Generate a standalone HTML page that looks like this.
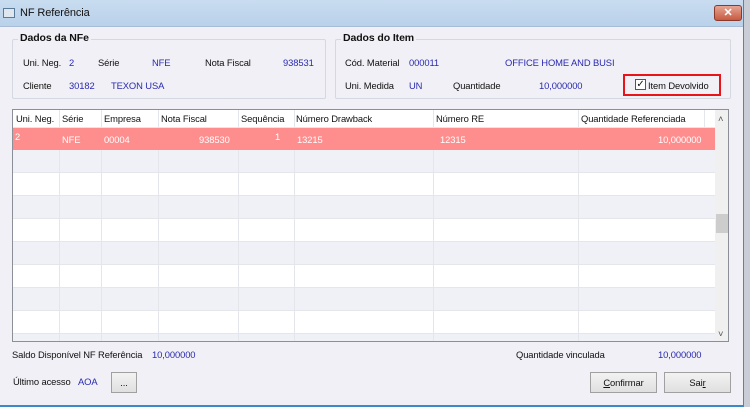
<!DOCTYPE html>
<html><head><style>
*{margin:0;padding:0;box-sizing:border-box}
body{width:750px;height:407px;background:#c9ced6;font-family:"Liberation Sans",sans-serif;font-size:9.4px;letter-spacing:-0.1px;color:#111;position:relative;overflow:hidden}
.win{position:absolute;left:0;top:0;width:744px;height:407px;background:#f0f0f6;border-right:1px solid #6d7d92;border-bottom:2px solid #3a89c9}
.title{position:absolute;left:0;top:0;width:743px;height:27px;background:linear-gradient(#c9dcf0,#b9d1ea);border-bottom:1px solid #a9bdd6}
.title span{position:absolute;left:20px;top:7px;font-size:11px}
.ico{position:absolute;left:3px;top:8px;width:12px;height:10px;background:#dfe6ee;border:1px solid #5a7a9a}
.close{position:absolute;left:714px;top:5px;width:28px;height:16px;border-radius:3px;background:linear-gradient(#e6a594,#c75a43);border:1px solid #8a3a2a;color:#fff;font-weight:bold;text-align:center;font-size:11px;line-height:14px}
.grp{position:absolute;border:1px solid #d4d8e0;border-radius:2px}
.grp b{position:absolute;top:-8px;left:5px;background:#f0f0f6;padding:0 2px;font-size:10.5px}
.t{position:absolute;white-space:nowrap;line-height:11px}
.v{color:#2a2ab0}
.w{color:#fff}
.vl{position:absolute;top:110px;width:1px;height:231px;background:#e4e6ec}
.hl{position:absolute;left:13px;width:702px;height:1px;background:#e4e6ec}
.btn{position:absolute;height:21px;border:1px solid #a0a0a0;background:linear-gradient(#f2f2f2,#e0e0e0);text-align:center;line-height:19px}
</style></head><body>
<div class="win">
<div class="title"><div class="ico"></div><span>NF Referência</span><div class="close">✕</div></div>

<div class="grp" style="left:12px;top:39px;width:314px;height:60px"><b>Dados da NFe</b></div>
<div class="t" style="left:23px;top:57px">Uni. Neg.</div><div class="t v" style="left:69px;top:57px">2</div>
<div class="t" style="left:98px;top:57px">Série</div><div class="t v" style="left:152px;top:57px">NFE</div>
<div class="t" style="left:205px;top:57px">Nota Fiscal</div><div class="t v" style="left:283px;top:57px">938531</div>
<div class="t" style="left:23px;top:80px">Cliente</div><div class="t v" style="left:69px;top:80px">30182</div><div class="t v" style="left:111px;top:80px">TEXON USA</div>

<div class="grp" style="left:335px;top:39px;width:396px;height:60px"><b>Dados do Item</b></div>
<div class="t" style="left:345px;top:57px">Cód. Material</div><div class="t v" style="left:409px;top:57px">000011</div><div class="t v" style="left:505px;top:57px">OFFICE HOME AND BUSI</div>
<div class="t" style="left:345px;top:80px">Uni. Medida</div><div class="t v" style="left:409px;top:80px">UN</div>
<div class="t" style="left:453px;top:80px">Quantidade</div><div class="t v" style="left:539px;top:80px">10,000000</div>
<div style="position:absolute;left:623px;top:74px;width:98px;height:22px;border:2px solid #e8141a"></div>
<div style="position:absolute;left:635px;top:79px;width:11px;height:11px;border:1px solid #555;background:#fff;font-size:10px;line-height:9px;text-align:center">✓</div>
<div class="t" style="left:648px;top:80px">Item Devolvido</div>

<!-- table -->
<div style="position:absolute;left:12px;top:109px;width:717px;height:233px;background:#fff;border:1px solid #8a8f98"></div>
<div style="position:absolute;left:13px;top:150px;width:702px;height:23px;background:#f0f1f6"></div>
<div style="position:absolute;left:13px;top:196px;width:702px;height:23px;background:#f0f1f6"></div>
<div style="position:absolute;left:13px;top:242px;width:702px;height:23px;background:#f0f1f6"></div>
<div style="position:absolute;left:13px;top:288px;width:702px;height:23px;background:#f0f1f6"></div>
<div style="position:absolute;left:13px;top:334px;width:702px;height:7px;background:#f0f1f6"></div>
<div class="vl" style="left:59px"></div><div class="vl" style="left:101px"></div><div class="vl" style="left:158px"></div><div class="vl" style="left:238px"></div><div class="vl" style="left:294px"></div><div class="vl" style="left:433px"></div><div class="vl" style="left:578px"></div><div class="vl" style="left:704px;height:18px"></div>
<div class="hl" style="top:127px"></div>
<div class="hl" style="top:172px"></div><div class="hl" style="top:195px"></div><div class="hl" style="top:218px"></div><div class="hl" style="top:241px"></div><div class="hl" style="top:264px"></div><div class="hl" style="top:287px"></div><div class="hl" style="top:310px"></div><div class="hl" style="top:333px"></div>
<div style="position:absolute;left:13px;top:128px;width:702px;height:22px;background:#fe8e8e"></div>
<div class="t" style="left:16px;top:113px">Uni. Neg.</div><div class="t" style="left:62px;top:113px">Série</div><div class="t" style="left:104px;top:113px">Empresa</div><div class="t" style="left:161px;top:113px">Nota Fiscal</div><div class="t" style="left:241px;top:113px">Sequência</div><div class="t" style="left:296px;top:113px">Número Drawback</div><div class="t" style="left:436px;top:113px">Número RE</div><div class="t" style="left:581px;top:113px">Quantidade Referenciada</div>
<div class="t w" style="left:15px;top:131px">2</div><div class="t w" style="left:62px;top:134px">NFE</div><div class="t w" style="left:104px;top:134px">00004</div><div class="t w" style="left:199px;top:134px">938530</div><div class="t w" style="left:275px;top:131px">1</div><div class="t w" style="left:297px;top:134px">13215</div><div class="t w" style="left:440px;top:134px">12315</div><div class="t w" style="left:658px;top:134px">10,000000</div>
<div style="position:absolute;left:715px;top:110px;width:13px;height:231px;background:#f0f0f0"></div>
<div class="t" style="left:718px;top:113px;color:#555">˄</div>
<div style="position:absolute;left:716px;top:214px;width:12px;height:19px;background:#cdcdcd"></div>
<div class="t" style="left:718px;top:328px;color:#555">˅</div>

<div class="t" style="left:12px;top:349px">Saldo Disponível NF Referência</div><div class="t v" style="left:152px;top:349px">10,000000</div>
<div class="t" style="left:516px;top:349px">Quantidade vinculada</div><div class="t v" style="left:658px;top:349px">10,000000</div>
<div class="t" style="left:13px;top:376px">Último acesso</div><div class="t v" style="left:78px;top:376px">AOA</div>
<div class="btn" style="left:111px;top:372px;width:26px">...</div>
<div class="btn" style="left:590px;top:372px;width:67px"><u>C</u>onfirmar</div>
<div class="btn" style="left:664px;top:372px;width:67px">Sai<u>r</u></div>
</div>
</body></html>
